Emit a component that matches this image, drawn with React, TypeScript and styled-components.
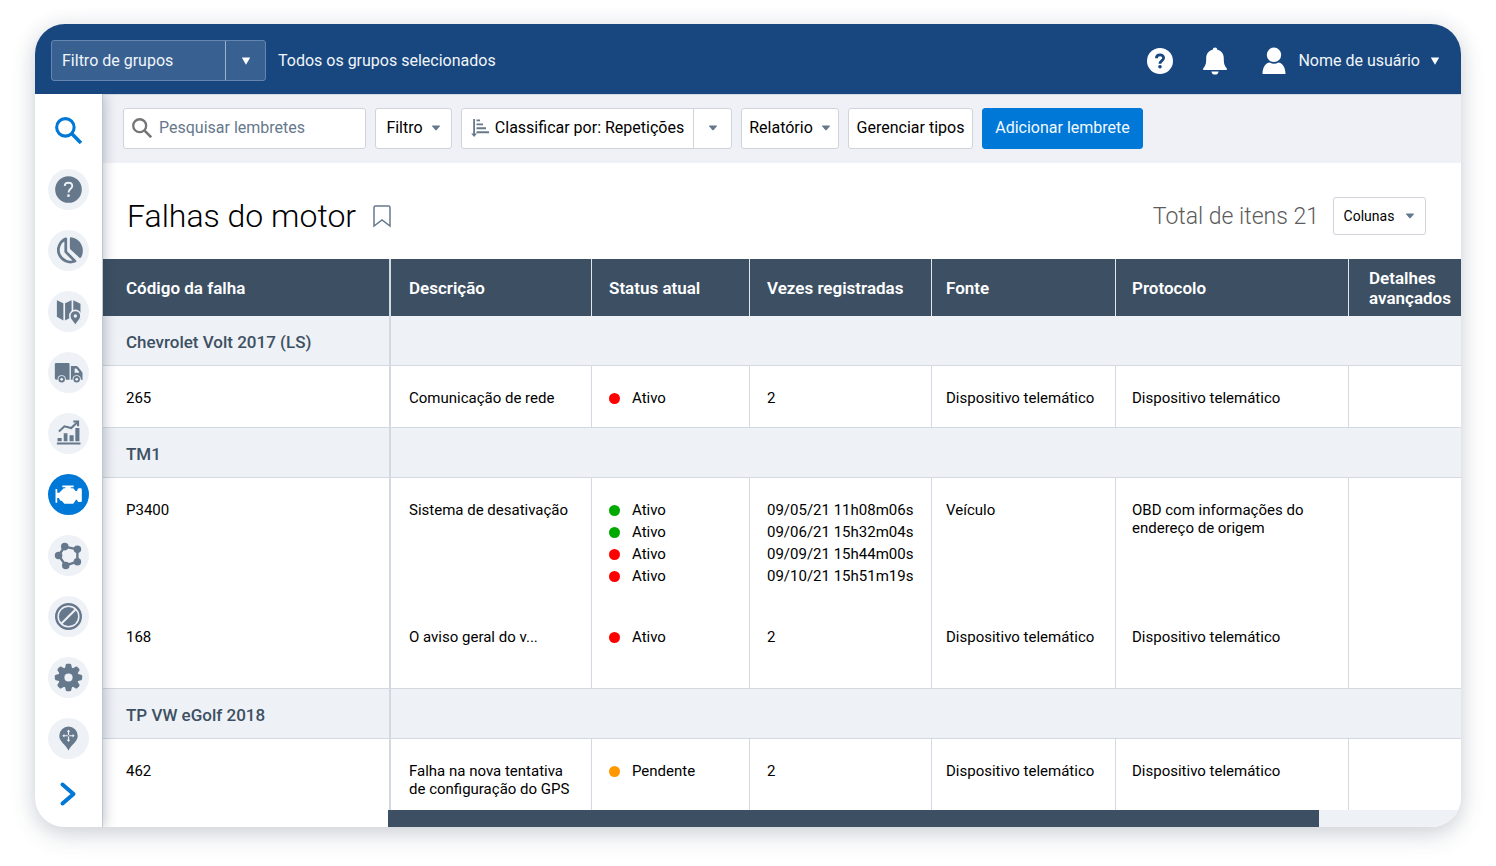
import React from "react";
import styled, { createGlobalStyle, css } from "styled-components";

const color = {
  navy: "#17477e",
  blue: "#0078d7",
  slate: "#3d5063",
  icon: "#66788c",
  pale: "#eef1f6",
  bar: "#f0f1f7",
  line: "#d3d9e1",
  control: "#d0d3da",
  ok: "#00aa00",
  bad: "#ff0000",
  warn: "#ff9800",
};

const GlobalStyle = createGlobalStyle`
  *, *::before, *::after { box-sizing: border-box; }
  body {
    margin: 0;
    background: #fff;
    color: #000;
    font: 400 15px/18px Roboto, "Liberation Sans", sans-serif;
  }
  button, input { font: inherit; color: inherit; }
  button { cursor: pointer; }
`;

const Page = styled.div`
  padding: 24px 35px 39px;
`;

const Card = styled.div`
  border-radius: 30px;
  overflow: hidden;
  background: #fff;
`;

const Shadow = styled.div`
  border-radius: 30px;
  box-shadow: 0 8px 24px rgba(50, 70, 90, 0.2), 0 0 20px rgba(50, 70, 90, 0.08);
`;

const TopBar = styled.header`
  position: relative;
  z-index: 2;
  display: flex;
  align-items: center;
  height: 70px;
  padding: 3px 21px 0 16px;
  background: ${color.navy};
  color: #f1f5fa;
  font-size: 16px;
  line-height: 20px;
`;

const GroupFilter = styled.div`
  display: flex;
  width: 215px;
  height: 41px;
  margin-right: 12px;
  border: 1px solid #6486b0;
  border-radius: 3px;
  background: #386192;
`;

const GroupInput = styled.input`
  flex: 1;
  min-width: 0;
  padding: 0 10px;
  border: 0;
  background: transparent;
  &::placeholder { color: #f1f5fa; opacity: 1; }
`;

const GroupToggle = styled.button`
  display: grid;
  place-items: center;
  width: 40px;
  padding: 0;
  border: 0;
  border-left: 1px solid #9db2cc;
  background: transparent;
`;

const TopActions = styled.div`
  display: flex;
  align-items: center;
  gap: 28px;
  margin-left: auto;
`;

const IconButton = styled.button`
  display: grid;
  place-items: center;
  padding: 0;
  border: 0;
  background: transparent;
`;

const UserButton = styled.button`
  display: flex;
  align-items: center;
  gap: 10px;
  padding: 0;
  border: 0;
  margin-left: 6px;
  background: transparent;
  & > svg:first-child { margin-right: 2px; }
`;

const Body = styled.div`
  display: flex;
`;

const Sidebar = styled.nav`
  position: relative;
  z-index: 1;
  display: flex;
  flex-direction: column;
  align-items: center;
  gap: 20px;
  flex: 0 0 68px;
  padding: 22px 1px 0 0;
  border-right: 1px solid #c0c7d1;
  background: #fff;
  box-shadow: 1px 0 12px rgba(30, 45, 65, 0.3);
`;

const PlainLink = styled.a`
  display: grid;
  place-items: center;
  height: 33px;
  padding-bottom: 4px;
`;

const NavLink = styled.a<{ $active?: boolean }>`
  display: block;
  width: 41px;
  height: 41px;
  border-radius: 50%;
  color: ${(p) => (p.$active ? "#fff" : color.icon)};
  background: ${(p) => (p.$active ? color.blue : color.pale)};
  --hole: ${(p) => (p.$active ? color.blue : color.pale)};
  & > svg { display: block; }
`;

const Main = styled.main`
  flex: 1;
  min-width: 0;
`;

const Toolbar = styled.div`
  display: flex;
  align-items: center;
  gap: 9px;
  height: 69px;
  padding: 0 20px 2px;
  border-top: 1px solid #d5dae4;
  background: ${color.bar};
  font-size: 16px;
  line-height: 20px;
`;

const controlBox = css`
  border: 1px solid ${color.control};
  border-radius: 3px;
  background: #fff;
`;

const SearchBox = styled.label`
  ${controlBox}
  display: flex;
  align-items: center;
  gap: 7px;
  width: 243px;
  height: 41px;
  padding: 0 8px;
`;

const SearchInput = styled.input`
  flex: 1;
  min-width: 0;
  padding: 0;
  border: 0;
  outline: 0;
  background: transparent;
  &::placeholder { color: ${color.icon}; opacity: 1; }
`;

const ToolButton = styled.button<{ $w: number; $primary?: boolean }>`
  ${controlBox}
  display: flex;
  align-items: center;
  justify-content: center;
  gap: 8px;
  width: ${(p) => p.$w}px;
  height: 41px;
  padding: 0;
  white-space: nowrap;
  ${(p) =>
    p.$primary &&
    css`
      border-color: ${color.blue};
      background: ${color.blue};
      color: #f4f9ff;
    `}
`;

const Split = styled.div`
  ${controlBox}
  display: flex;
  width: 271px;
  height: 41px;
`;

const SplitPart = styled.button<{ $arrow?: boolean }>`
  display: flex;
  align-items: center;
  justify-content: center;
  gap: 6px;
  padding: 0;
  border: 0;
  background: transparent;
  white-space: nowrap;
  ${(p) =>
    p.$arrow
      ? css`
          width: 38px;
          border-left: 1px solid ${color.control};
        `
      : css`
          flex: 1;
        `}
`;

const TitleRow = styled.div`
  display: flex;
  align-items: center;
  height: 96px;
  padding: 10px 35px 0 24px;
`;

const Title = styled.h1`
  margin: 0 16px 0 0;
  font-size: 32px;
  line-height: 40px;
  font-weight: 300;
`;

const Total = styled.span`
  margin-left: auto;
  margin-right: 14px;
  padding-top: 2px;
  color: #5c5c5c;
  font-size: 23px;
  line-height: 28px;
  font-weight: 300;
`;

const ColumnsButton = styled.button`
  ${controlBox}
  display: flex;
  align-items: center;
  justify-content: center;
  gap: 11px;
  width: 93px;
  height: 38px;
  padding: 0;
  font-size: 14px;
`;

const Table = styled.table`
  width: 100%;
  table-layout: fixed;
  border-collapse: separate;
  border-spacing: 0;
`;

const HeadCell = styled.th`
  height: 57px;
  padding: 0 0 0 17px;
  border-left: 1px solid #e3e7ec;
  background: ${color.slate};
  color: #fff;
  font-size: 17px;
  line-height: 20px;
  font-weight: 600;
  text-align: left;
  &:first-child { padding-left: 23px; border-left: 0; }
  &:nth-child(2) { padding-left: 18px; border-left: 2px solid ${color.line}; }
  &:nth-child(5) { padding-left: 14px; }
  &:nth-child(6) { padding-left: 16px; }
  &:last-child { padding-left: 20px; }
`;

const GroupHead = styled.th`
  height: 50px;
  padding: 2px 0 0 23px;
  border-bottom: 1px solid ${color.line};
  background: ${color.pale};
  color: ${color.slate};
  font-size: 17px;
  line-height: 20px;
  font-weight: 500;
  text-align: left;
`;

const GroupFill = styled.td`
  padding: 0;
  border-left: 2px solid ${color.line};
  border-bottom: 1px solid ${color.line};
  background: ${color.pale};
`;

const DataRow = styled.tr<{ $h: number; $last?: boolean }>`
  height: ${(p) => p.$h}px;
  & > td { border-bottom: ${(p) => (p.$last ? `1px solid ${color.line}` : 0)}; }
`;

const Cell = styled.td`
  padding: 23px 0 0 17px;
  border-left: 1px solid ${color.line};
  vertical-align: top;
  &:first-child { padding-left: 23px; border-left: 0; }
  &:nth-child(2) { padding: 23px 16px 0 18px; border-left: 2px solid ${color.line}; }
  &:nth-child(5) { padding-left: 14px; }
  &:nth-child(6) { padding-left: 16px; }
`;

const Lines = styled.div`
  display: grid;
  row-gap: 4px;
`;

const Status = styled.span`
  display: flex;
  align-items: center;
  gap: 12px;
`;

const Dot = styled.span<{ $tone: string }>`
  width: 11px;
  height: 11px;
  border-radius: 50%;
  background: ${(p) => p.$tone};
`;

const ScrollRow = styled.div`
  display: flex;
  height: 17px;
  padding-left: 285px;
`;

const Track = styled.div`
  flex: 1;
  background: ${color.pale};
`;

const Thumb = styled.div`
  width: 931px;
  max-width: 87%;
  height: 17px;
  background: ${color.slate};
`;

const Caret = ({ fill = color.icon }: { fill?: string }) => (
  <svg width="10" height="6" viewBox="0 0 10 6" aria-hidden="true">
    <path d="M1.6.5h6.8q1 0 .4.8L5.7 4.9q-.7.7-1.4 0L1.2 1.3Q.6.5 1.6.5Z" fill={fill} />
  </svg>
);

const WhiteCaret = () => (
  <svg width="10" height="8" viewBox="0 0 10 8" aria-hidden="true">
    <path d="M.8.6h8.4L5 7.8Z" fill="#fff" />
  </svg>
);

const Lens = ({ size, stroke, width }: { size: number; stroke: string; width: number }) => (
  <svg width={size} height={size} viewBox="0 0 26 26" fill="none" stroke={stroke} strokeWidth={width} aria-hidden="true">
    <circle cx="10" cy="10" r="8.4" />
    <path d="M16 16l9 9" strokeWidth={width + 0.4} />
  </svg>
);

const Glyph = ({ children }: { children: React.ReactNode }) => (
  <svg width="41" height="41" viewBox="0 0 120 120" fill="currentColor" aria-hidden="true">
    {children}
  </svg>
);

const hole = { fill: "var(--hole)" };
const holeStroke = { stroke: "var(--hole)", fill: "none" };

const navItems: { label: string; active?: boolean; art: React.ReactNode }[] = [
  {
    label: "Ajuda",
    art: (
      <>
        <circle cx="60" cy="60" r="39" />
        <path d="M49 50C49 37 71 37 71 50C71 58 60 58 60 69" style={holeStroke} strokeWidth="5.5" />
        <circle cx="60" cy="78" r="4" style={hole} />
      </>
    ),
  },
  {
    label: "Painel",
    art: (
      <>
        <path d="M52 26V64L79 91A35 35 0 1 1 52 26Z" fill="none" stroke="currentColor" strokeWidth="8" strokeLinejoin="round" />
        <path d="M64 24Q64 21 67 21A40 40 0 0 1 97 80Q95 84 92 81L66 57Q64 55 64 52Z" />
      </>
    ),
  },
  {
    label: "Mapa",
    art: (
      <>
        <path d="M26 27L45 36V86L26 75ZM50 36L69 27V76L50 86ZM74 27L95 37V84L74 76Z" />
        <path d="M80 99C74 90 66 82 66 73A14 14 0 0 1 94 73C94 82 86 90 80 99Z" stroke="var(--hole)" strokeWidth="9" style={hole} />
        <path d="M80 97C74 88 66 82 66 73A14 14 0 0 1 94 73C94 82 86 88 80 97Z" />
        <circle cx="80" cy="73" r="5" style={hole} />
      </>
    ),
  },
  {
    label: "Veículos",
    art: (
      <>
        <path d="M24 32H60Q63 32 63 35V81H24Q20 81 20 77V35Q20 32 24 32ZM67 41H82Q86 41 88 44L98 56Q101 59 101 62V81H67Z" />
        <path d="M78 48H83L91 58V61H78Z" style={hole} />
        <g style={hole}>
          <circle cx="40" cy="80" r="12" />
          <circle cx="84" cy="80" r="12" />
        </g>
        <circle cx="40" cy="80" r="9.500" />
        <circle cx="84" cy="80" r="9.500" />
        <circle cx="40" cy="80" r="4" style={hole} />
        <circle cx="84" cy="80" r="4" style={hole} />
      </>
    ),
  },
  {
    label: "Atividade",
    art: (
      <>
        <path d="M28 73H40V83H28ZM46 59H57V83H46ZM63 65H75V83H63ZM80 44H92V83H80ZM26 86H95V92H26Z" />
        <path d="M32 54L48 39L68 44L86 27" fill="none" stroke="currentColor" strokeWidth="6" />
        <path d="M74 22H91V39H85V28H74Z" />
      </>
    ),
  },
  {
    label: "Motor e manutenção",
    active: true,
    art: (
      <>
        <path d="M42 34H75V39H67V42H74L81 50H85Q86 42 90 42H96Q99 42 99 45V79Q99 82 96 82H90Q86 82 85 75H82L74 87H48L40 78H36L32 70H27V84H22V44H27V55H33L38 50L46 42H51V39H42Z" />
      </>
    ),
  },
  {
    label: "Zonas",
    art: (
      <>
        <path d="M49 34L86 42V78L52 89L31 60Z" fill="none" stroke="currentColor" strokeWidth="7" />
        <circle cx="49" cy="34" r="11" />
        <circle cx="86" cy="42" r="11" />
        <circle cx="86" cy="78" r="11" />
        <circle cx="52" cy="89" r="11" />
        <circle cx="31" cy="60" r="11" />
      </>
    ),
  },
  {
    label: "Regras",
    art: (
      <>
        <circle cx="60" cy="60" r="36" fill="none" stroke="currentColor" strokeWidth="7" />
        <circle cx="60" cy="60" r="28" />
        <path d="M38 82L82 38" style={holeStroke} strokeWidth="6" />
      </>
    ),
  },
  {
    label: "Administração",
    art: (
      <>
        <circle cx="60" cy="60" r="30" />
        {[0, 45, 90, 135, 180, 225, 270, 315].map((a) => (
          <path key={a} d="M49 36L52 23Q53 20 56 20H64Q67 20 68 23L71 36Z" transform={`rotate(${a} 60 60)`} />
        ))}
        <circle cx="60" cy="60" r="12" style={hole} />
      </>
    ),
  },
  {
    label: "Locais",
    art: (
      <>
        <path d="M60 95C52 78 33 70 33 52A27 27 0 0 1 87 52C87 70 68 78 60 95Z" />
        <path d="M60 37V67M45 52H75" style={holeStroke} strokeWidth="3.500" />
        <path d="M60 34L65 40H55ZM60 70L65 64H55ZM42 52L48 47V57ZM78 52L72 47V57Z" style={hole} />
        <circle cx="60" cy="52" r="2.500" />
      </>
    ),
  },
];

type State = { tone: string; text: string };
type Fault = { code: string; desc: string; states: State[]; times: string[]; source: string; protocol: string; h: number };

const device = "Dispositivo telemático";
const active = (tone: string): State => ({ tone, text: "Ativo" });

const groups: { name: string; rows: Fault[] }[] = [
  {
    name: "Chevrolet Volt 2017 (LS)",
    rows: [{ code: "265", desc: "Comunicação de rede", states: [active(color.bad)], times: ["2"], source: device, protocol: device, h: 62 }],
  },
  {
    name: "TM1",
    rows: [
      {
        code: "P3400",
        desc: "Sistema de desativação",
        states: [active(color.ok), active(color.ok), active(color.bad), active(color.bad)],
        times: ["09/05/21 11h08m06s", "09/06/21 15h32m04s", "09/09/21 15h44m00s", "09/10/21 15h51m19s"],
        source: "Veículo",
        protocol: "OBD com informações do endereço de origem",
        h: 127,
      },
      { code: "168", desc: "O aviso geral do v...", states: [active(color.bad)], times: ["2"], source: device, protocol: device, h: 84 },
    ],
  },
  {
    name: "TP VW eGolf 2018",
    rows: [
      {
        code: "462",
        desc: "Falha na nova tentativa de configuração do GPS",
        states: [{ tone: color.warn, text: "Pendente" }],
        times: ["2"],
        source: device,
        protocol: device,
        h: 71,
      },
    ],
  },
];

const headings = ["Código da falha", "Descrição", "Status atual", "Vezes registradas", "Fonte", "Protocolo", "Detalhes avançados"];
const columnWidths = [286, 202, 158, 182, 184, 233];

export default function App() {
  return (
    <>
      <GlobalStyle />
      <Page>
        <Shadow>
          <Card>
            <TopBar>
              <GroupFilter>
                <GroupInput aria-label="Filtro de grupos" placeholder="Filtro de grupos" />
                <GroupToggle aria-label="Abrir filtro de grupos">
                  <WhiteCaret />
                </GroupToggle>
              </GroupFilter>
              <span>Todos os grupos selecionados</span>
              <TopActions>
                <IconButton aria-label="Ajuda">
                  <svg width="28" height="28" viewBox="0 0 28 28" aria-hidden="true">
                    <circle cx="14" cy="14" r="13" fill="#fff" />
                    <path d="M10.4 11.2C10.4 6.8 17.6 6.8 17.6 11C17.6 13.6 14 13.6 14 16.8" fill="none" stroke={color.navy} strokeWidth="2.8" />
                    <circle cx="14" cy="19.8" r="1.8" fill={color.navy} />
                  </svg>
                </IconButton>
                <IconButton aria-label="Notificações">
                  <svg width="26" height="28" viewBox="0 0 26 28" fill="#fff" aria-hidden="true">
                    <path d="M13 .5Q15.2.5 15.4 2.8C20 4 21.8 7.4 21.8 11.5C21.8 17 22.6 19 24.8 21.2V23H1.2V21.2C3.4 19 4.2 17 4.2 11.5C4.2 7.4 6 4 10.6 2.8Q10.8.5 13 .5Z" />
                    <path d="M9.4 24.4H16.6Q16 27.6 13 27.6Q10 27.6 9.4 24.4Z" />
                  </svg>
                </IconButton>
                <UserButton>
                  <svg width="24" height="28" viewBox="0 0 24 28" fill="#fff" aria-hidden="true">
                    <circle cx="12" cy="7.8" r="7.2" />
                    <path d="M.5 27C.5 19.600 4.500 15.800 7.500 15.600Q12 18 16.500 15.600C19.500 15.800 23.500 19.600 23.500 27Z" />
                  </svg>
                  Nome de usuário
                  <WhiteCaret />
                </UserButton>
              </TopActions>
            </TopBar>
            <Body>
              <Sidebar aria-label="Principal">
                <PlainLink href="#buscar" aria-label="Buscar">
                  <Lens size={27} stroke={color.blue} width={3} />
                </PlainLink>
                {navItems.map((item) => (
                  <NavLink key={item.label} href="#" aria-label={item.label} $active={item.active}>
                    <Glyph>{item.art}</Glyph>
                  </NavLink>
                ))}
                <PlainLink href="#expandir" aria-label="Expandir menu">
                  <svg width="18" height="26" viewBox="0 0 18 26" fill="none" aria-hidden="true">
                    <path d="M3.500 3.500L14.500 13L3.500 22.500" stroke={color.blue} strokeWidth="4" strokeLinecap="round" strokeLinejoin="round" />
                  </svg>
                </PlainLink>
              </Sidebar>
              <Main>
                <Toolbar>
                  <SearchBox>
                    <Lens size={20} stroke="#757575" width={3} />
                    <SearchInput type="search" aria-label="Pesquisar lembretes" placeholder="Pesquisar lembretes" />
                  </SearchBox>
                  <ToolButton $w={77}>
                    Filtro <Caret />
                  </ToolButton>
                  <Split>
                    <SplitPart>
                      <svg width="18" height="18" viewBox="0 0 18 18" fill={color.icon} aria-hidden="true">
                        <path d="M2.200 0H4V14.400H6L3.100 18L.2 14.400H2.200ZM5.500.6H9V2.200H5.500ZM5.500 4.500H12V6.200H5.500ZM5.500 8.300H15V10.200H5.500ZM5.500 12.200H18V14.200H5.500Z" />
                      </svg>
                      Classificar por: Repetições
                    </SplitPart>
                    <SplitPart $arrow aria-label="Opções de classificação">
                      <Caret />
                    </SplitPart>
                  </Split>
                  <ToolButton $w={98}>
                    Relatório <Caret />
                  </ToolButton>
                  <ToolButton $w={125}>Gerenciar tipos</ToolButton>
                  <ToolButton $w={161} $primary>
                    Adicionar lembrete
                  </ToolButton>
                </Toolbar>
                <TitleRow>
                  <Title>Falhas do motor</Title>
                  <IconButton aria-label="Salvar nos favoritos">
                    <svg width="20" height="24" viewBox="0 0 20 24" fill="none" stroke={color.icon} strokeWidth="1.500" aria-hidden="true">
                      <path d="M2 22V3.500Q2 2 3.500 2H16.500Q18 2 18 3.500V22L10 16Z" />
                    </svg>
                  </IconButton>
                  <Total>Total de itens 21</Total>
                  <ColumnsButton>
                    Colunas <Caret />
                  </ColumnsButton>
                </TitleRow>
                <Table>
                  <colgroup>
                    {columnWidths.map((w, i) => (
                      <col key={i} width={w} />
                    ))}
                    <col />
                  </colgroup>
                  <thead>
                    <tr>
                      {headings.map((h) => (
                        <HeadCell key={h} scope="col">
                          {h}
                        </HeadCell>
                      ))}
                    </tr>
                  </thead>
                  {groups.map((g) => (
                    <tbody key={g.name}>
                      <tr>
                        <GroupHead scope="rowgroup">{g.name}</GroupHead>
                        <GroupFill colSpan={6} />
                      </tr>
                      {g.rows.map((r, i) => (
                        <DataRow key={r.code} $h={r.h} $last={i === g.rows.length - 1 && g !== groups[groups.length - 1]}>
                          <Cell>{r.code}</Cell>
                          <Cell>{r.desc}</Cell>
                          <Cell>
                            <Lines>
                              {r.states.map((s, n) => (
                                <Status key={n}>
                                  <Dot $tone={s.tone} />
                                  {s.text}
                                </Status>
                              ))}
                            </Lines>
                          </Cell>
                          <Cell>
                            <Lines>
                              {r.times.map((t) => (
                                <span key={t}>{t}</span>
                              ))}
                            </Lines>
                          </Cell>
                          <Cell>{r.source}</Cell>
                          <Cell>{r.protocol}</Cell>
                          <Cell />
                        </DataRow>
                      ))}
                    </tbody>
                  ))}
                </Table>
                <ScrollRow>
                  <Track>
                    <Thumb />
                  </Track>
                </ScrollRow>
              </Main>
            </Body>
          </Card>
        </Shadow>
      </Page>
    </>
  );
}
